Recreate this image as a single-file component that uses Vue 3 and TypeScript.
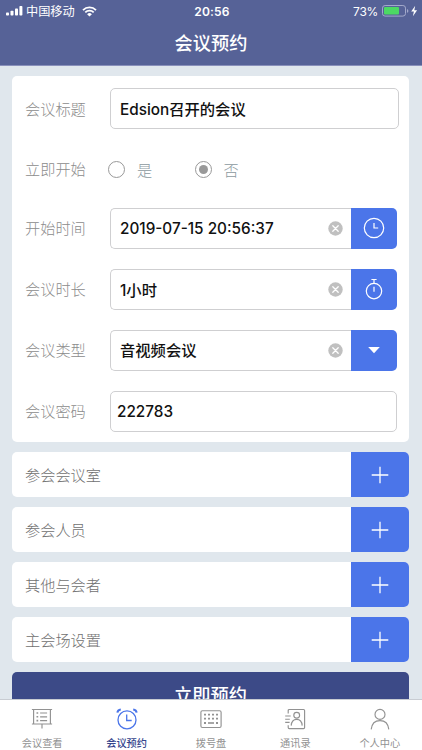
<script setup lang="ts">
import { ref } from 'vue'

type Action = 'clock' | 'timer' | 'caret'
interface Field {
  label: string
  value: string
  kind: 'time' | 'duration' | 'type'
  action: Action
}

const startNow = ref(false)
const fields = ref<Field[]>([
  { label: '开始时间', value: '2019-07-15 20:56:37', kind: 'time', action: 'clock' },
  { label: '会议时长', value: '1小时', kind: 'duration', action: 'timer' },
  { label: '会议类型', value: '音视频会议', kind: 'type', action: 'caret' },
])
const groups = ['参会会议室', '参会人员', '其他与会者', '主会场设置']
const tabs = [
  { label: '会议查看', icon: 'board' },
  { label: '会议预约', icon: 'alarm' },
  { label: '拨号盘', icon: 'keypad' },
  { label: '通讯录', icon: 'contacts' },
  { label: '个人中心', icon: 'person' },
]
const active = ref(1)
</script>

<template>
  <div class="screen">
    <header class="header">
      <div class="status">
        <div class="status-left">
          <svg class="signal" width="17" height="10" viewBox="0 0 17 10" fill="#fff">
            <rect x="0" y="6.4" width="3" height="3.2" rx=".8" />
            <rect x="4.5" y="4.8" width="3" height="4.8" rx=".8" />
            <rect x="9" y="2.6" width="3" height="7" rx=".8" />
            <rect x="13.4" y="0" width="3" height="9.6" rx=".8" />
          </svg>
          <span class="carrier">中国移动</span>
          <svg class="wifi" width="15" height="11" viewBox="0 0 15 11">
            <path d="M1 4.1a9.3 9.3 0 0 1 13 0M3.3 6.4a6 6 0 0 1 8.4 0" fill="none" stroke="#fff" stroke-width="1.8" />
            <path d="M7.5 10.6 5.1 8.2a3.4 3.4 0 0 1 4.8 0z" fill="#fff" />
          </svg>
        </div>
        <span class="clock">20:56</span>
        <div class="status-right">
          <span class="percent">73%</span>
          <svg width="36" height="12" viewBox="0 0 36 12">
            <rect x=".5" y=".5" width="23" height="10.6" rx="2.6" fill="none" stroke="#a3a9cb" />
            <rect x="2" y="2" width="15" height="7.6" rx="1" fill="#4cd964" />
            <path d="M25 4a2 2 0 0 1 0 3.8z" fill="#a3a9cb" />
            <path d="M33.2.7 29.2 6.5h2.7l-1 4.7 4.2-6h-2.8z" fill="#fff" />
          </svg>
        </div>
      </div>
      <h1 class="title">会议预约</h1>
    </header>

    <main class="content">
      <section class="card">
        <div class="row">
          <span class="label">会议标题</span>
          <div class="box box-title"><span class="value mixed">Edsion召开的会议</span></div>
        </div>
        <div class="row row-radio">
          <span class="label">立即开始</span>
          <div class="choice" @click="startNow = true">
            <i class="radio" :class="{ checked: startNow }"></i><span class="choice-name">是</span>
          </div>
          <div class="choice" @click="startNow = false">
            <i class="radio" :class="{ checked: !startNow }"></i><span class="choice-name">否</span>
          </div>
        </div>
        <div v-for="f in fields" :key="f.label" class="row">
          <span class="label">{{ f.label }}</span>
          <div class="box box-action">
            <span class="value" :class="f.kind">{{ f.value }}</span>
            <svg class="clear" width="15" height="15" viewBox="0 0 15 15" @click="f.value = ''">
              <circle cx="7.5" cy="7.5" r="7.2" fill="#c0c0c0" />
              <path d="m4.8 4.8 5.4 5.4m0-5.4-5.4 5.4" stroke="#fff" stroke-width="1.3" stroke-linecap="round" />
            </svg>
          </div>
          <button class="action">
            <svg v-if="f.action === 'clock'" width="22" height="22" viewBox="0 0 22 22">
              <circle cx="11" cy="11" r="9.7" />
              <path d="M11 6v5h4.2" />
            </svg>
            <svg v-else-if="f.action === 'timer'" width="22" height="22" viewBox="0 0 22 22">
              <circle cx="11" cy="13.1" r="7.7" />
              <path d="M11 8.8v5M11 2v3.4M8.4 1.5h5.2" />
            </svg>
            <svg v-else width="22" height="22" viewBox="0 0 22 22">
              <path class="solid" d="M5.2 8h11.6L11 14.3z" />
            </svg>
          </button>
        </div>
        <div class="row">
          <span class="label">会议密码</span>
          <div class="box box-code"><span class="value code">222783</span></div>
        </div>
      </section>

      <section v-for="g in groups" :key="g" class="group">
        <span class="group-name">{{ g }}</span>
        <button class="add">
          <svg width="18" height="18" viewBox="0 0 18 18"><path d="M9 .7v16.6M.7 9h16.6" /></svg>
        </button>
      </section>

      <button class="submit">立即预约</button>
    </main>

    <nav class="tabbar">
      <div v-for="(t, i) in tabs" :key="t.label" class="tab" :class="{ active: i === active }" @click="active = i">
        <svg width="22" height="22" viewBox="0 0 22 22">
          <g v-if="t.icon === 'board'">
            <path d="M.9 1.5h20.2M2.6 1.5v14.2M19.4 1.5v14.2M.9 16h20.2M11 16v4.5M9.1 5h7M9.1 8.8h7M9.1 12.6h7" />
            <path d="M5.5 5h1.7M5.5 8.8h1.7M5.5 12.6h1.7" stroke-width="1.6" />
          </g>
          <g v-else-if="t.icon === 'alarm'">
            <circle cx="11" cy="11.9" r="9" />
            <path d="M10.7 6.5v6h5" />
            <path d="M1.4 4.6Q1.6 1.7 4.8 1.4M17.2 1.4q3.2.3 3.4 3.2" stroke-width="2" />
          </g>
          <g v-else-if="t.icon === 'keypad'">
            <rect x=".9" y="2.7" width="20.2" height="16.8" rx="1.5" />
            <path d="M4 6.6h2M8 6.6h2M12 6.6h2M16 6.6h2M4 10.6h2M8 10.6h2M12 10.6h2M16 10.6h2M4 15h2M16 15h2" stroke-width="1.8" />
            <path d="M8 15h6" stroke-width="1.6" />
          </g>
          <g v-else-if="t.icon === 'contacts'">
            <path d="M4.2 5.4V2.5q0-1 1-1h14.4q1 0 1 1v17.1q0 1-1 1H5.2q-1 0-1-1v-2.4M1.2 8h5.5M1.2 11.2h4.6M1.2 14.4h4.4" />
            <circle cx="12.7" cy="7.2" r="2.9" />
            <path d="M7.2 17.6c.3-4 2.4-6.2 5.5-6.2s5.2 2.2 5.5 6.2" />
          </g>
          <g v-else>
            <circle cx="11" cy="6.4" r="5" />
            <path d="M2.2 21.4c.6-5.9 3.9-8.8 8.8-8.8s8.2 2.9 8.8 8.8" />
          </g>
        </svg>
        <span class="tab-label">{{ t.label }}</span>
      </div>
    </nav>
  </div>
</template>

<style>
body {
  overflow: hidden;
}
</style>

<style scoped>
* {
  box-sizing: border-box;
}
.screen {
  display: flex;
  flex-direction: column;
  width: 100%;
  height: 750px;
  overflow: hidden;
  background: #e0e7ed;
  font-family: Inter, 'Noto Sans CJK SC', sans-serif;
}
button {
  display: flex;
  align-items: center;
  justify-content: center;
  padding: 0;
  border: 0;
  font-family: inherit;
}
.header {
  flex: none;
  height: 66px;
  background: #566297;
  border-bottom: 1px solid #8990bb;
  color: #fff;
}
.status {
  display: grid;
  grid-template-columns: 1fr auto 1fr;
  align-items: center;
  height: 22px;
  padding: 0 4px 0 6px;
}
.status-left {
  display: flex;
  align-items: center;
}
.carrier {
  margin-left: 3px;
  padding-top: 1px;
  font-size: 12.2px;
  line-height: 21px;
}
.wifi {
  margin-left: 7px;
}
.clock {
  font-size: 12px;
  font-weight: 600;
  letter-spacing: 0.2px;
}
.status-right {
  display: flex;
  align-items: center;
  justify-content: flex-end;
  gap: 4px;
}
.percent {
  font-size: 12px;
  letter-spacing: -0.3px;
}
.title {
  margin: 0;
  font-size: 18.2px;
  font-weight: 500;
  line-height: 43px;
  text-align: center;
}
.content {
  flex: 1;
  display: flex;
  flex-direction: column;
  gap: 10px;
  min-height: 0;
  padding: 9.5px 13px 0 12px;
  overflow: hidden;
}
.card {
  flex: none;
  display: flex;
  flex-direction: column;
  gap: 20px;
  height: 366.5px;
  padding: 12.5px 10px 10px 13px;
  border-radius: 5px;
  background: #fff;
}
.row {
  flex: none;
  display: flex;
  align-items: center;
  height: 41px;
}
.row-radio {
  height: 38.5px;
}
.label {
  width: 85px;
  padding-bottom: 2px;
  color: #8c8c8c;
  font-size: 15.2px;
  font-weight: 300;
}
.row-radio .label {
  padding-bottom: 0;
}
.box {
  display: flex;
  align-items: center;
  justify-content: space-between;
  height: 41px;
  padding: 0 8px 0 9px;
  border: 1px solid #cfcfd1;
  border-radius: 5px;
  background: #fff;
}
.box-title {
  width: 289px;
}
.box-action {
  width: 241px;
  border-right: 0;
  border-radius: 5px 0 0 5px;
}
.box-code {
  width: 287px;
  padding-left: 6px;
}
.value {
  color: #111;
  font-size: 15.3px;
  font-weight: 500;
  white-space: nowrap;
}
.value.mixed,
.value.type {
  padding-bottom: 2px;
}
.action {
  width: 46px;
  height: 41px;
  border-radius: 0 5px 5px 0;
  background: #4b75e9;
}
.action svg {
  fill: none;
  stroke: #fff;
  stroke-width: 1.2;
}
.action .solid {
  fill: #fff;
  stroke: none;
}
.choice {
  display: flex;
  align-items: center;
  gap: 12px;
  width: 86.5px;
  margin-left: -2px;
  margin-right: 2px;
  padding-top: 2px;
  color: #8b999e;
  font-size: 15.2px;
  font-weight: 300;
}
.radio {
  display: flex;
  align-items: center;
  justify-content: center;
  width: 17px;
  height: 17px;
  border: 1px solid #999;
  border-radius: 50%;
}
.radio.checked::after {
  content: '';
  width: 9px;
  height: 9px;
  border-radius: 50%;
  background: #999;
}
.group {
  flex: none;
  display: flex;
  align-items: center;
  justify-content: space-between;
  height: 45px;
  padding-left: 13px;
  border-radius: 5px;
  overflow: hidden;
  background: #fff;
}
.group-name {
  padding-bottom: 2px;
  color: #707070;
  font-size: 15.2px;
  font-weight: 300;
}
.add {
  width: 58px;
  height: 45px;
  background: #4b75e9;
}
.add path {
  stroke: #fff;
  stroke-width: 1.3;
}
.submit {
  flex: none;
  height: 45px;
  padding-bottom: 2px;
  border-radius: 5px;
  background: #3c4a87;
  color: #fff;
  font-size: 18.2px;
  font-weight: 500;
}
.tabbar {
  flex: none;
  display: grid;
  grid-template-columns: repeat(5, 1fr);
  height: 51px;
  border-top: 1px solid #c8ccd2;
  background: #fff;
}
.tab {
  display: flex;
  flex-direction: column;
  align-items: center;
  padding-top: 8px;
  color: #929292;
}
.tab svg {
  fill: none;
  stroke: currentColor;
  stroke-width: 1.15;
}
.tab-label {
  margin-top: 4px;
  font-size: 10.2px;
  line-height: 18px;
}
.tab.active {
  color: #34458c;
  font-weight: 500;
}
.tab.active svg {
  color: #4b75e9;
  stroke-width: 1.3;
}
</style>
